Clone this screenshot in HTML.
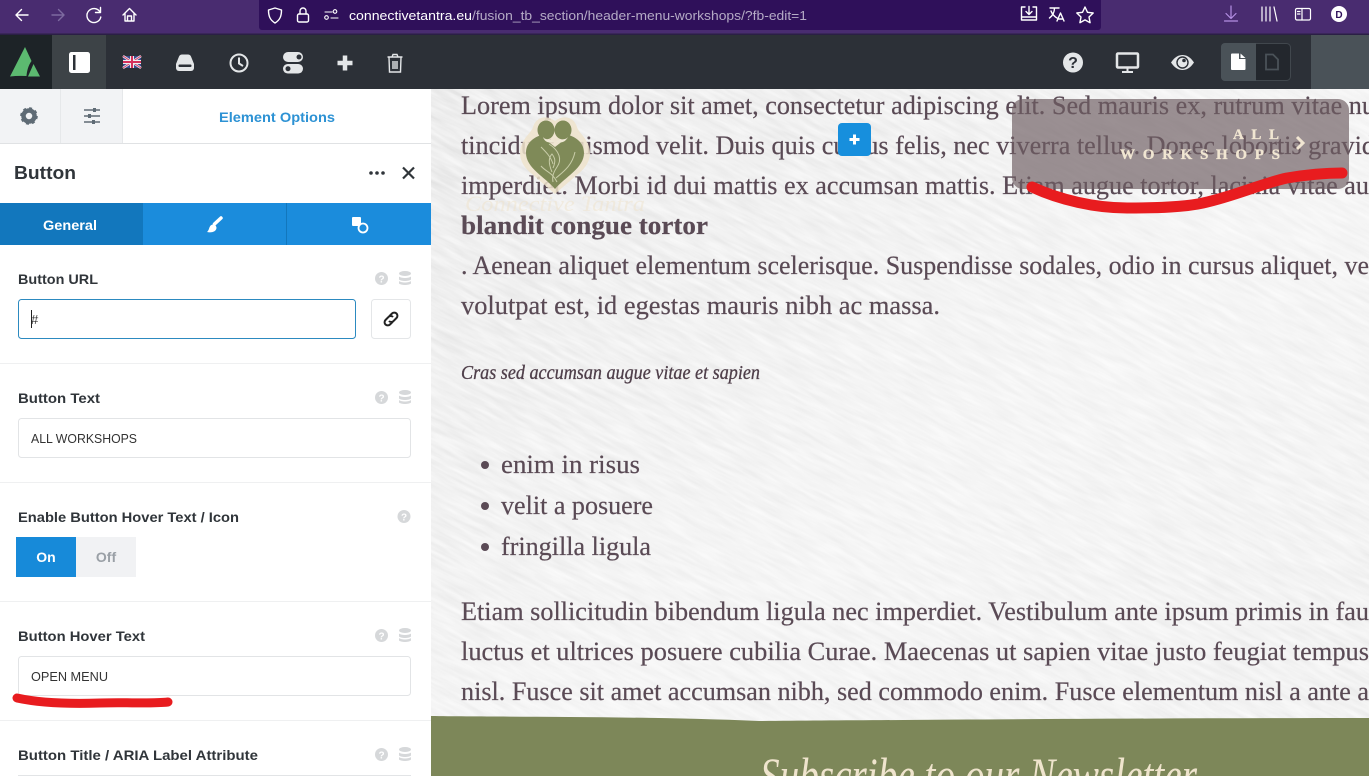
<!DOCTYPE html>
<html><head><meta charset="utf-8"><title>Button</title>
<style>
html,body{margin:0;padding:0;width:1369px;height:776px;overflow:hidden;background:#fff}
svg{display:block}
.s{font-family:"Liberation Serif",serif;font-size:26px;fill:#5a4a55;stroke:#5a4a55;stroke-width:.2}
.l{font-family:"Liberation Sans",sans-serif;font-size:14px;font-weight:bold;fill:#30353a}
.v{font-family:"Liberation Sans",sans-serif;font-size:13px;fill:#333}
.ic{fill:none;stroke:#fff;stroke-width:1.4;stroke-linecap:round;stroke-linejoin:round}
.ti{fill:#e4e6e8}
.h{fill:#d6d8da}
</style></head><body>
<svg width="1369" height="776" viewBox="0 0 1369 776" xmlns="http://www.w3.org/2000/svg">
<defs>
<filter id="paper" x="0" y="0" width="100%" height="100%" color-interpolation-filters="sRGB">
<feTurbulence type="fractalNoise" baseFrequency="0.025 0.2" numOctaves="3" seed="7"/>
<feColorMatrix type="matrix" values="0.11 0 0 0 0.875  0.11 0 0 0 0.875  0.11 0 0 0 0.875  0 0 0 0 1"/>
</filter>
<linearGradient id="lite" x1="0" y1="0" x2="1" y2="1">
<stop offset="0" stop-color="#fff" stop-opacity="0"/><stop offset=".55" stop-color="#fff" stop-opacity=".45"/><stop offset="1" stop-color="#fff" stop-opacity=".25"/>
</linearGradient>
<clipPath id="pg"><rect x="431" y="89" width="938" height="687"/></clipPath>
</defs>
<!-- page background -->
<g clip-path="url(#pg)">
<rect x="-100" y="-300" width="2000" height="1500" transform="rotate(27 900 430)" filter="url(#paper)"/>
<rect x="431" y="89" width="938" height="687" fill="url(#lite)"/>
</g>
<!-- article text -->
<text class="s" x="461" y="114" textLength="914" lengthAdjust="spacingAndGlyphs">Lorem ipsum dolor sit amet, consectetur adipiscing elit. Sed mauris ex, rutrum vitae nu</text>
<text class="s" x="461" y="154" textLength="914" lengthAdjust="spacingAndGlyphs">tincidunt euismod velit. Duis quis cursus felis, nec viverra tellus. Donec lobortis gravid</text>
<text class="s" x="461" y="194" textLength="908" lengthAdjust="spacingAndGlyphs">imperdiet. Morbi id dui mattis ex accumsan mattis. Etiam augue tortor, lacinia vitae au</text>
<text class="s" x="461" y="234" font-weight="bold" textLength="247" lengthAdjust="spacingAndGlyphs">blandit congue tortor</text>
<text class="s" x="461" y="274" textLength="908" lengthAdjust="spacingAndGlyphs">. Aenean aliquet elementum scelerisque. Suspendisse sodales, odio in cursus aliquet, ve</text>
<text class="s" x="461" y="314" textLength="479" lengthAdjust="spacingAndGlyphs">volutpat est, id egestas mauris nibh ac massa.</text>
<text x="461" y="379" font-family="Liberation Serif,serif" font-style="italic" font-size="20" fill="#4f3f4a" stroke="#4f3f4a" stroke-width=".3" textLength="299" lengthAdjust="spacingAndGlyphs">Cras sed accumsan augue vitae et sapien</text>
<circle cx="485" cy="465" r="4" fill="#5a4a55"/><circle cx="485" cy="506" r="4" fill="#5a4a55"/><circle cx="485" cy="547" r="4" fill="#5a4a55"/>
<text class="s" x="501" y="473" textLength="139" lengthAdjust="spacingAndGlyphs">enim in risus</text>
<text class="s" x="501" y="514" textLength="152" lengthAdjust="spacingAndGlyphs">velit a posuere</text>
<text class="s" x="501" y="555" textLength="150" lengthAdjust="spacingAndGlyphs">fringilla ligula</text>
<text class="s" x="461" y="620" textLength="908" lengthAdjust="spacingAndGlyphs">Etiam sollicitudin bibendum ligula nec imperdiet. Vestibulum ante ipsum primis in fau</text>
<text class="s" x="461" y="660" textLength="908" lengthAdjust="spacingAndGlyphs">luctus et ultrices posuere cubilia Curae. Maecenas ut sapien vitae justo feugiat tempus</text>
<text class="s" x="461" y="700" textLength="908" lengthAdjust="spacingAndGlyphs">nisl. Fusce sit amet accumsan nibh, sed commodo enim. Fusce elementum nisl a ante a</text>
<!-- logo -->
<path d="M555 121C548 115 536 116 533 127C531 133 526 135 522 144C517 156 522 166 532 174L555 194L578 174C588 166 593 156 588 144C584 135 579 133 577 127C574 116 562 115 555 121Z" fill="#efe3cb" opacity=".85"/>
<ellipse cx="546" cy="130" rx="8.500" ry="9.500" fill="#7f8a58"/><ellipse cx="563" cy="130" rx="8.500" ry="9.500" fill="#7f8a58"/>
<path d="M541 135C533 138 526 143 526 153C526 168 545 177 555 189C565 177 584 168 584 153C584 143 577 138 569 135L564 140L555 147L546 140Z" fill="#7f8a58"/>
<path d="M543 137C546 141 551 138 554 142C550 143 545 143 543 137ZM568 137C565 141 559 138 556 142C560 143 565 143 568 137Z" fill="#efe8d5"/>
<path d="M549 144C560 151 562 160 557 167C553 173 552 177 553 182M541 147C546 152 551 157 553 164M557 182C552 172 546 172 541 166M556 178C563 172 572 166 575 152M552 172C549 165 548 158 552 154C555 158 556 161 553 168" fill="none" stroke="#c9cda9" stroke-width="1"/>
<text x="465" y="211" font-family="Liberation Serif,serif" font-style="italic" font-size="22" fill="#efe3cb" opacity=".5" textLength="180" lengthAdjust="spacingAndGlyphs">Connective Tantra</text>
<!-- plus -->
<rect x="838" y="123" width="33" height="33" rx="4" fill="#178fdd"/>
<path d="M854.500 134.500v10M849.500 139.500h10" stroke="#fff" stroke-width="3"/>
<!-- overlay button -->
<rect x="1012" y="99" width="337" height="90" rx="11" fill="#6f5e63" opacity=".68"/>
<text x="1233" y="139" font-family="Liberation Serif,serif" font-weight="bold" font-size="15" fill="#f1e6d2" stroke="#f1e6d2" stroke-width=".3" textLength="46">ALL</text>
<text x="1120" y="159" font-family="Liberation Serif,serif" font-weight="bold" font-size="15" fill="#f1e6d2" stroke="#f1e6d2" stroke-width=".3" textLength="160">WORKSHOPS</text>
<path d="M1297 137l6 6-6 6" fill="none" stroke="#f1e6d2" stroke-width="3"/>
<path d="M1032 187C1060 200 1095 208 1127 208C1160 208 1185 207 1203 203C1235 196 1260 184 1287 178C1305 175 1325 173 1342 173" fill="none" stroke="#e81c1f" stroke-width="11" stroke-linecap="round"/>
<!-- newsletter band -->
<path d="M431 716C500 717 640 716 759 721C900 720 1150 718 1369 718V776H431Z" fill="#7d8759"/>
<g clip-path="url(#pg)"><text x="760" y="792" font-family="Liberation Serif,serif" font-style="italic" font-size="50" fill="#efe4cd" textLength="437" lengthAdjust="spacingAndGlyphs">Subscribe to our Newsletter</text></g>
<!-- browser bar -->
<rect width="1369" height="35" fill="#492c70"/>
<rect y="33.500" width="1369" height="1.500" fill="#2b1f45"/>
<path d="M259 0H1101V27a3 3 0 0 1-3 3H262a3 3 0 0 1-3-3Z" fill="#2f105a"/>
<path class="ic" d="M28 15H16M21.500 9.500L16 15l5.500 5.500"/>
<path class="ic" style="stroke:#7d6aa0" d="M52 15H64M58.500 9.500L64 15l-5.500 5.500"/>
<path class="ic" d="M100 12a7 7 0 1 0 .8 5M100.500 7.500v5h-5"/>
<path class="ic" d="M123 15l6.500-6.500L136 15M125 13.500V21h9v-7.500M127.500 21v-5h4v5"/>
<path class="ic" d="M275 8l6.500 2c0 6-1.500 10-6.500 13-5-3-6.500-7-6.500-13Z"/>
<rect class="ic" x="297.500" y="14" width="11" height="8" rx="1.500"/><path class="ic" d="M300 14v-3a3 3 0 0 1 6 0v3"/>
<path class="ic" style="stroke-width:1.100" d="M325 12h7M331 18h7"/><circle class="ic" style="stroke-width:1.100" cx="335" cy="11.500" r="1.800"/><circle class="ic" style="stroke-width:1.100" cx="326.500" cy="17.500" r="1.800"/>
<text x="349" y="20" font-family="Liberation Sans,sans-serif" font-size="13" fill="#fff" textLength="123" lengthAdjust="spacingAndGlyphs">connectivetantra.eu</text>
<text x="472" y="20" font-family="Liberation Sans,sans-serif" font-size="13" fill="#b5abc6" textLength="335" lengthAdjust="spacingAndGlyphs">/fusion_tb_section/header-menu-workshops/?fb-edit=1</text>
<path class="ic" d="M1025 7h-3.500v13h15V7H1033M1029 6.500v8M1026 11.500l3 3 3-3M1021.500 17h15"/>
<path class="ic" d="M1050 8h9M1054.500 8c0 4-2 8-5 10M1051 11c1 3 4 6 6 7M1057 21l3.500-8 3.500 8M1058 19h5"/>
<path class="ic" d="M1085 7l2.500 5.300 5.700.7-4.200 4 1.100 5.700-5.100-2.800-5.100 2.800 1.100-5.700-4.200-4 5.700-.7Z"/>
<path class="ic" style="stroke:#b48fe4;stroke-width:1.200" d="M1231 6v12M1226 13.500l5 5 5-5M1224.500 21h13"/>
<path class="ic" style="stroke-width:1.200" d="M1262 7v14M1266 7v14M1270 7v14M1274 7l3 14"/>
<rect class="ic" style="stroke-width:1.200" x="1295.500" y="8.500" width="15" height="11.500" rx="1.500"/><path class="ic" style="stroke-width:1.200" d="M1302 8.500V20M1297.500 11.500h2.500M1297.500 14h2.500"/>
<circle cx="1339" cy="14" r="8" fill="#fff"/>
<text x="1339" y="18" text-anchor="middle" font-family="Liberation Sans,sans-serif" font-weight="bold" font-size="10" fill="#2f105a">D</text>
<!-- builder toolbar -->
<rect y="35" width="1369" height="54" fill="#2c3037"/>
<rect y="35" width="52" height="54" fill="#1d2327"/>
<rect x="52" y="35" width="54" height="54" fill="#3d4347"/>
<rect x="1311" y="35" width="58" height="54" fill="#4a5258"/>
<path d="M10 76.500L25 47L31.500 61C28 66 27 71 26.500 76Q18 75.500 10 76.500Z" fill="#5cba70"/><path d="M28 76.500L33.500 64L40 76.500Z" fill="#5cba70"/>
<rect x="69" y="52" width="21" height="21" rx="2.500" fill="#fff"/><rect x="73" y="55" width="2.500" height="15" fill="#2c3037"/>
<g><rect x="123" y="56" width="18" height="12" fill="#3a4a8c"/><path d="M123 56l18 12M141 56l-18 12" stroke="#e8e8ee" stroke-width="2.500"/><path d="M123 56l18 12M141 56l-18 12" stroke="#d63c66" stroke-width="1"/><path d="M132 56v12M123 62h18" stroke="#eee" stroke-width="4"/><path d="M132 56v12M123 62h18" stroke="#d6305c" stroke-width="2"/></g>
<path d="M176 68V64L179 56.500Q180 54.500 182 54.500H188Q190 54.500 191 56.500L194 64V68A3 3 0 0 1 191 71H179A3 3 0 0 1 176 68Z" fill="#e4e6e8"/><rect x="178.500" y="64.500" width="13" height="2.500" rx="1" fill="#2c3037"/>
<circle cx="239" cy="63" r="8.500" fill="none" stroke="#e4e6e8" stroke-width="2"/><path d="M239 57.500V63.500L243 66" fill="none" stroke="#e4e6e8" stroke-width="2"/>
<rect x="283" y="52" width="20" height="10" rx="5" class="ti"/><rect x="283" y="64" width="20" height="9.500" rx="4.750" class="ti"/><circle cx="299" cy="57" r="2.500" fill="#2c3037"/><circle cx="288" cy="68.700" r="2.500" fill="#2c3037"/>
<path d="M345 55.500v15M337.500 63h15" stroke="#e4e6e8" stroke-width="4.500"/>
<path d="M387.500 57h15M392 57l1-2.500h4l1 2.500M389 57.500l.5 14.500h11l.5-14.500M393 61v8M395 61v8M397 61v8" fill="none" stroke="#e4e6e8" stroke-width="1.400"/>
<circle cx="1073" cy="62.500" r="10" fill="#e4e6e8"/>
<text x="1073" y="68" text-anchor="middle" font-family="Liberation Sans,sans-serif" font-weight="bold" font-size="16" fill="#2c3037">?</text>
<rect x="1117" y="53.500" width="21" height="14" rx="1" fill="none" stroke="#e4e6e8" stroke-width="2.500"/><path d="M1127.500 68v3M1122 72h11" stroke="#e4e6e8" stroke-width="2"/>
<path d="M1171 62.500C1175 56.500 1179 55 1182.500 55C1186 55 1190 56.500 1194 62.500C1190 68.500 1186 70 1182.500 70C1179 70 1175 68.500 1171 62.500Z" fill="#e4e6e8"/><circle cx="1182.500" cy="62.500" r="5.500" fill="none" stroke="#2c3037" stroke-width="1.400"/><circle cx="1184" cy="60.500" r="1.800" fill="#2c3037"/>
<rect x="1221.500" y="43.500" width="69" height="37" rx="4" fill="#23272d" stroke="#41474d"/>
<path d="M1225 43h31v38h-31a4 4 0 0 1-4-4v-30a4 4 0 0 1 4-4Z" fill="#4a5258"/>
<path d="M1232 53.500h7v5.500h6.500V69a1 1 0 0 1-1 1H1232a1 1 0 0 1-1-1V54.500a1 1 0 0 1 1-1ZM1240.500 53.500L1245.500 58H1240.500Z" fill="#fff"/>
<path d="M1266 54.500h7l5 5v10h-12Z" fill="none" stroke="#4a5258" stroke-width="1.800"/>
<!-- sidebar -->
<rect x="0" y="89" width="431" height="687" fill="#fff"/>
<rect x="0" y="89" width="122" height="54" fill="#f2f3f5"/>
<rect x="60" y="89" width="1" height="54" fill="#e6e8ea"/><rect x="122" y="89" width="1" height="54" fill="#e6e8ea"/>
<rect x="0" y="143" width="431" height="1" fill="#e0e2e4"/>
<circle cx="29" cy="116" r="5.500" fill="none" stroke="#5f6b75" stroke-width="4.500"/>
<circle cx="29" cy="116" r="7.800" fill="none" stroke="#5f6b75" stroke-width="2" stroke-dasharray="3 3.100"/>
<path d="M84 110h16M84 116h16M84 122h16" stroke="#5f6b75" stroke-width="1.600"/><rect x="93" y="108" width="3" height="4" fill="#5f6b75"/><rect x="88" y="114" width="3" height="4" fill="#5f6b75"/><rect x="92" y="120" width="3" height="4" fill="#5f6b75"/>
<text x="219" y="122" font-family="Liberation Sans,sans-serif" font-weight="bold" font-size="14" fill="#2d92d4" textLength="116" lengthAdjust="spacingAndGlyphs">Element Options</text>
<text x="14" y="179" font-family="Liberation Sans,sans-serif" font-weight="bold" font-size="18" fill="#30353a" textLength="62" lengthAdjust="spacingAndGlyphs">Button</text>
<circle cx="371" cy="173" r="1.800" fill="#30353a"/><circle cx="377" cy="173" r="1.800" fill="#30353a"/><circle cx="383" cy="173" r="1.800" fill="#30353a"/>
<path d="M403 167.500l11 11M414 167.500l-11 11" stroke="#30353a" stroke-width="2.200"/>
<rect y="203" width="431" height="42" fill="#1b8cdc"/>
<rect y="203" width="143" height="42" fill="#1277bd"/>
<rect x="286" y="203" width="1" height="42" fill="#1277bd"/>
<text x="43" y="230" font-family="Liberation Sans,sans-serif" font-weight="bold" font-size="14" fill="#fff" textLength="54" lengthAdjust="spacingAndGlyphs">General</text>
<path d="M221 218L214.500 224" stroke="#fff" stroke-width="3.500" stroke-linecap="round"/>
<path d="M213 224.500C209.500 225 209.500 228 208.500 230C208 231 207.500 231.500 207 232C211 233 216 232 216.500 228C216.500 226 215 224.500 213 224.500Z" fill="#fff"/>
<rect x="352" y="217" width="9" height="9" rx="1" fill="#fff"/><circle cx="363" cy="228" r="4.500" fill="#1b8cdc" stroke="#fff" stroke-width="1.800"/>
<!-- fields -->
<text class="l" x="18" y="284" textLength="80" lengthAdjust="spacingAndGlyphs">Button URL</text>
<circle cx="381.500" cy="278.500" r="6.500" class="h"/><text x="381.500" y="282.500" text-anchor="middle" font-family="Liberation Sans,sans-serif" font-weight="bold" font-size="10" fill="#fff">?</text>
<ellipse cx="405" cy="273.500" rx="6" ry="2.500" class="h"/><path d="M399 276.500c2 2 10 2 12 0v3c-2 2-10 2-12 0ZM399 281c2 2 10 2 12 0v2.500c-2 2-10 2-12 0Z" class="h"/>
<rect x="18.500" y="299.500" width="337" height="39" rx="3" fill="#fff" stroke="#2c8ac0"/>
<text class="v" x="31" y="324" fill="#555">#</text><rect x="31" y="310" width="1" height="18" fill="#222"/>
<rect x="371.500" y="299.500" width="39" height="39" rx="3" fill="#fff" stroke="#e4e6e8"/>
<path d="M389 316.500l3-3a3 3 0 0 1 4.500 4.500l-3 3a3 3 0 0 1-4.500 0M393 321.500l-3 3a3 3 0 0 1-4.500-4.500l3-3a3 3 0 0 1 4.500 0" fill="none" stroke="#222" stroke-width="2"/>
<rect y="363" width="431" height="1" fill="#eff0f1"/>
<text class="l" x="18" y="403" textLength="82" lengthAdjust="spacingAndGlyphs">Button Text</text>
<circle cx="381.500" cy="397.500" r="6.500" class="h"/><text x="381.500" y="401.500" text-anchor="middle" font-family="Liberation Sans,sans-serif" font-weight="bold" font-size="10" fill="#fff">?</text>
<ellipse cx="405" cy="392.500" rx="6" ry="2.500" class="h"/><path d="M399 395.500c2 2 10 2 12 0v3c-2 2-10 2-12 0ZM399 400c2 2 10 2 12 0v2.500c-2 2-10 2-12 0Z" class="h"/>
<rect x="18.500" y="418.500" width="392" height="39" rx="3" fill="#fff" stroke="#e2e4e6"/>
<text class="v" x="31" y="443" textLength="106" lengthAdjust="spacingAndGlyphs">ALL WORKSHOPS</text>
<rect y="482" width="431" height="1" fill="#eff0f1"/>
<text class="l" x="18" y="522" textLength="221" lengthAdjust="spacingAndGlyphs">Enable Button Hover Text / Icon</text>
<circle cx="404" cy="516.500" r="6.500" class="h"/><text x="404" y="520.500" text-anchor="middle" font-family="Liberation Sans,sans-serif" font-weight="bold" font-size="10" fill="#fff">?</text>
<rect x="16" y="537" width="60" height="40" fill="#178ad9"/>
<rect x="76" y="537" width="60" height="40" fill="#f1f2f4"/>
<text x="46" y="562" text-anchor="middle" font-family="Liberation Sans,sans-serif" font-weight="bold" font-size="14" fill="#fff">On</text>
<text x="106" y="562" text-anchor="middle" font-family="Liberation Sans,sans-serif" font-weight="bold" font-size="14" fill="#9aa0a6">Off</text>
<rect y="601" width="431" height="1" fill="#eff0f1"/>
<text class="l" x="18" y="641" textLength="127" lengthAdjust="spacingAndGlyphs">Button Hover Text</text>
<circle cx="381.500" cy="635.500" r="6.500" class="h"/><text x="381.500" y="639.500" text-anchor="middle" font-family="Liberation Sans,sans-serif" font-weight="bold" font-size="10" fill="#fff">?</text>
<ellipse cx="405" cy="630.500" rx="6" ry="2.500" class="h"/><path d="M399 633.500c2 2 10 2 12 0v3c-2 2-10 2-12 0ZM399 638c2 2 10 2 12 0v2.500c-2 2-10 2-12 0Z" class="h"/>
<rect x="18.500" y="656.500" width="392" height="39" rx="3" fill="#fff" stroke="#e2e4e6"/>
<text class="v" x="31" y="681" textLength="77" lengthAdjust="spacingAndGlyphs">OPEN MENU</text>
<path d="M17 698C40 703 70 704 100 703C125 702 150 704 168 702" fill="none" stroke="#e81c1f" stroke-width="9" stroke-linecap="round"/>
<rect y="720" width="431" height="1" fill="#eff0f1"/>
<text class="l" x="18" y="760" textLength="240" lengthAdjust="spacingAndGlyphs">Button Title / ARIA Label Attribute</text>
<circle cx="381.500" cy="754.500" r="6.500" class="h"/><text x="381.500" y="758.500" text-anchor="middle" font-family="Liberation Sans,sans-serif" font-weight="bold" font-size="10" fill="#fff">?</text>
<ellipse cx="405" cy="749.500" rx="6" ry="2.500" class="h"/><path d="M399 752.500c2 2 10 2 12 0v3c-2 2-10 2-12 0ZM399 757c2 2 10 2 12 0v2.500c-2 2-10 2-12 0Z" class="h"/>
<rect x="18" y="775" width="393" height="1" fill="#e2e4e6"/>
</svg>
</body></html>
